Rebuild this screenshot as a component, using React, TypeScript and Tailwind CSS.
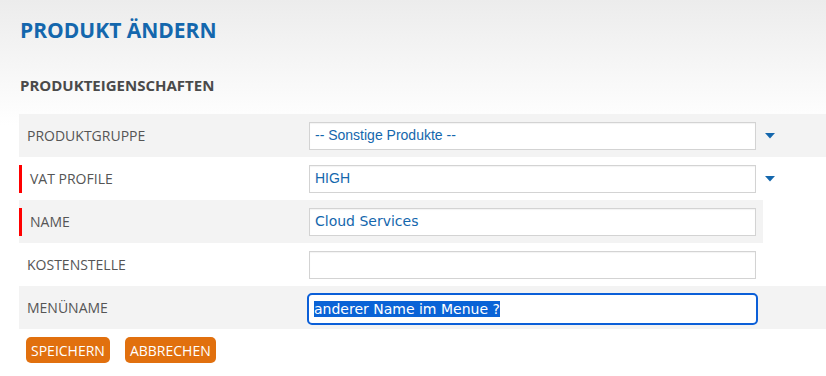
import { memo } from "react";

type Row = {
  label: string;
  value: string;
  kind: "select" | "text" | "focus";
  required?: boolean;
  gray?: boolean;
  short?: boolean;
};

const rows: Row[] = [
  { label: "Produktgruppe", value: "-- Sonstige Produkte --", kind: "select", gray: true },
  { label: "VAT Profile", value: "HIGH", kind: "select", required: true },
  { label: "Name", value: "Cloud Services", kind: "text", required: true, gray: true, short: true },
  { label: "Kostenstelle", value: "", kind: "text" },
  { label: "Menüname", value: "anderer Name im Menue ?", kind: "focus", gray: true },
];

function Arrow() {
  return (
    <svg width="10" height="6" viewBox="0 0 10 6" className="block">
      <polygon points="0,0 10,0 5,5.5" fill="#1467ad" />
    </svg>
  );
}

function FormRow({ row }: { row: Row }) {
  return (
    <div
      className={`flex h-[43px] items-center ${row.gray ? "bg-[#f3f3f3]" : ""} ${
        row.short ? "w-[744px]" : "w-full"
      }`}
    >
      <div className="flex h-full w-[290px] items-center">
        {row.required ? (
          <>
            <div className="h-[28px] w-[3px] bg-[#ff0000]" />
            <span className="pl-[8px] text-[14px] uppercase text-[#555]">{row.label}</span>
          </>
        ) : (
          <span className="pl-[8px] text-[14px] uppercase text-[#555]">{row.label}</span>
        )}
      </div>

      {row.kind === "focus" ? (
        <div className="mt-[2px] flex h-[28px] w-[447px] items-center rounded-[3px] bg-white pl-[5px] outline-2 outline-[#0b5fd8] font-['DejaVu_Sans',sans-serif] text-[14px] text-white">
          <span className="bg-[#0a63d6] leading-[16px]">{row.value}</span>
        </div>
      ) : (
        <div
          className={`flex h-[28px] w-[447px] items-center border border-[#d3d3d3] bg-white pl-[5px] shadow-[inset_0_1px_1px_rgba(0,0,0,0.05)] text-[#1467ad] ${
            row.kind === "select"
              ? "font-['Liberation_Sans',Arial,sans-serif] text-[14px]"
              : "font-['DejaVu_Sans',sans-serif] text-[14px]"
          }`}
        >
          {row.value}
        </div>
      )}

      {row.kind === "select" && (
        <div className="pl-[9px]">
          <Arrow />
        </div>
      )}
    </div>
  );
}

function ProduktForm() {
  return (
    <div className="min-h-[376px] w-[826px] bg-[linear-gradient(to_bottom,#ececec_0px,#ffffff_125px)] pl-[19px] pt-[15px] font-['Open_Sans',sans-serif]">
      <h1 className="pl-[1px] text-[21px] font-bold leading-[30px] text-[#1467ad]">PRODUKT ÄNDERN</h1>
      <h2 className="mt-[30px] pl-[1px] text-[15px] font-bold leading-[20px] text-[#4a4a4a]">
        PRODUKTEIGENSCHAFTEN
      </h2>

      <div className="mt-[19px] flex flex-col">
        {rows.map((r, i) => (
          <FormRow key={i} row={r} />
        ))}
      </div>

      <div className="mt-[8px] flex gap-[15px] pl-[7px]">
        <button className="h-[26px] rounded-[5px] bg-[#e1700e] px-[5px] text-[14px] uppercase text-white">
          Speichern
        </button>
        <button className="h-[26px] rounded-[5px] bg-[#e1700e] px-[5px] text-[14px] uppercase text-white">
          Abbrechen
        </button>
      </div>
    </div>
  );
}

const App = memo(ProduktForm);
export default App;
